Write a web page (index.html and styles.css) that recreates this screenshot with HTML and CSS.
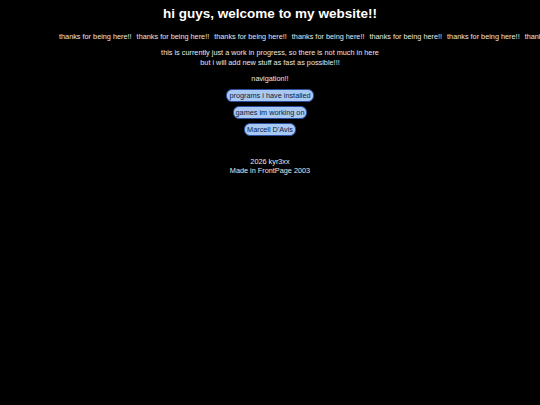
FILE: index.html
```html
<!DOCTYPE html>
<html>
<head>
<meta charset="utf-8">
<title>hi guys</title>
<link rel="stylesheet" href="styles.css">
</head>
<body>
<h1 class="title">hi guys, welcome to my website!!</h1>
<div class="marquee">
  <span>thanks for being here!!</span>
  <span>thanks for being here!!</span>
  <span>thanks for being here!!</span>
  <span>thanks for being here!!</span>
  <span>thanks for being here!!</span>
  <span>thanks for being here!!</span>
  <span>thanks for being here!!</span>
</div>
<p class="intro">this is currently just a work in progress, so there is not much in here<br>but i will add new stuff as fast as possible!!!</p>
<p class="nav-label">navigation!!</p>
<nav class="nav">
  <a class="btn" href="#">programs i have installed</a>
  <a class="btn" href="#">games im working on</a>
  <a class="btn" href="#">Marcell D'Avis</a>
</nav>
<footer class="footer">
  <div>2026 kyr3xx</div>
  <div>Made in FrontPage 2003</div>
</footer>
</body>
</html>
```
FILE: styles.css
```css
html, body {
  background: #000;
}
body {
  margin: 0;
  color: #e8e8e8;
  font-family: "Comic Sans MS", "Liberation Sans", sans-serif;
  font-size: 7.3px;
  text-align: center;
}
.title {
  margin: 0;
  padding-top: 5px;
  font-size: 13.5px;
  font-weight: bold;
  color: #fff;
  line-height: 18px;
}
.marquee {
  margin-top: 9px;
  display: flex;
  gap: 5px;
  padding-left: 59px;
  white-space: nowrap;
  overflow: hidden;
  line-height: 9px;
  text-align: left;
}
.intro {
  margin: 7px 0 0;
  line-height: 10px;
}
.nav-label {
  margin: 6px 0 0;
  line-height: 10px;
}
.nav {
  margin-top: 5px;
  display: flex;
  flex-direction: column;
  align-items: center;
  gap: 4px;
}
.btn {
  display: inline-block;
  background: #a9c9f2;
  color: #0a1a40;
  border: 1px solid #2a4fa0;
  border-radius: 6px;
  padding: 1px 2px;
  line-height: 9px;
  text-decoration: none;
}
.footer {
  margin-top: 21px;
  line-height: 9px;
}
```
